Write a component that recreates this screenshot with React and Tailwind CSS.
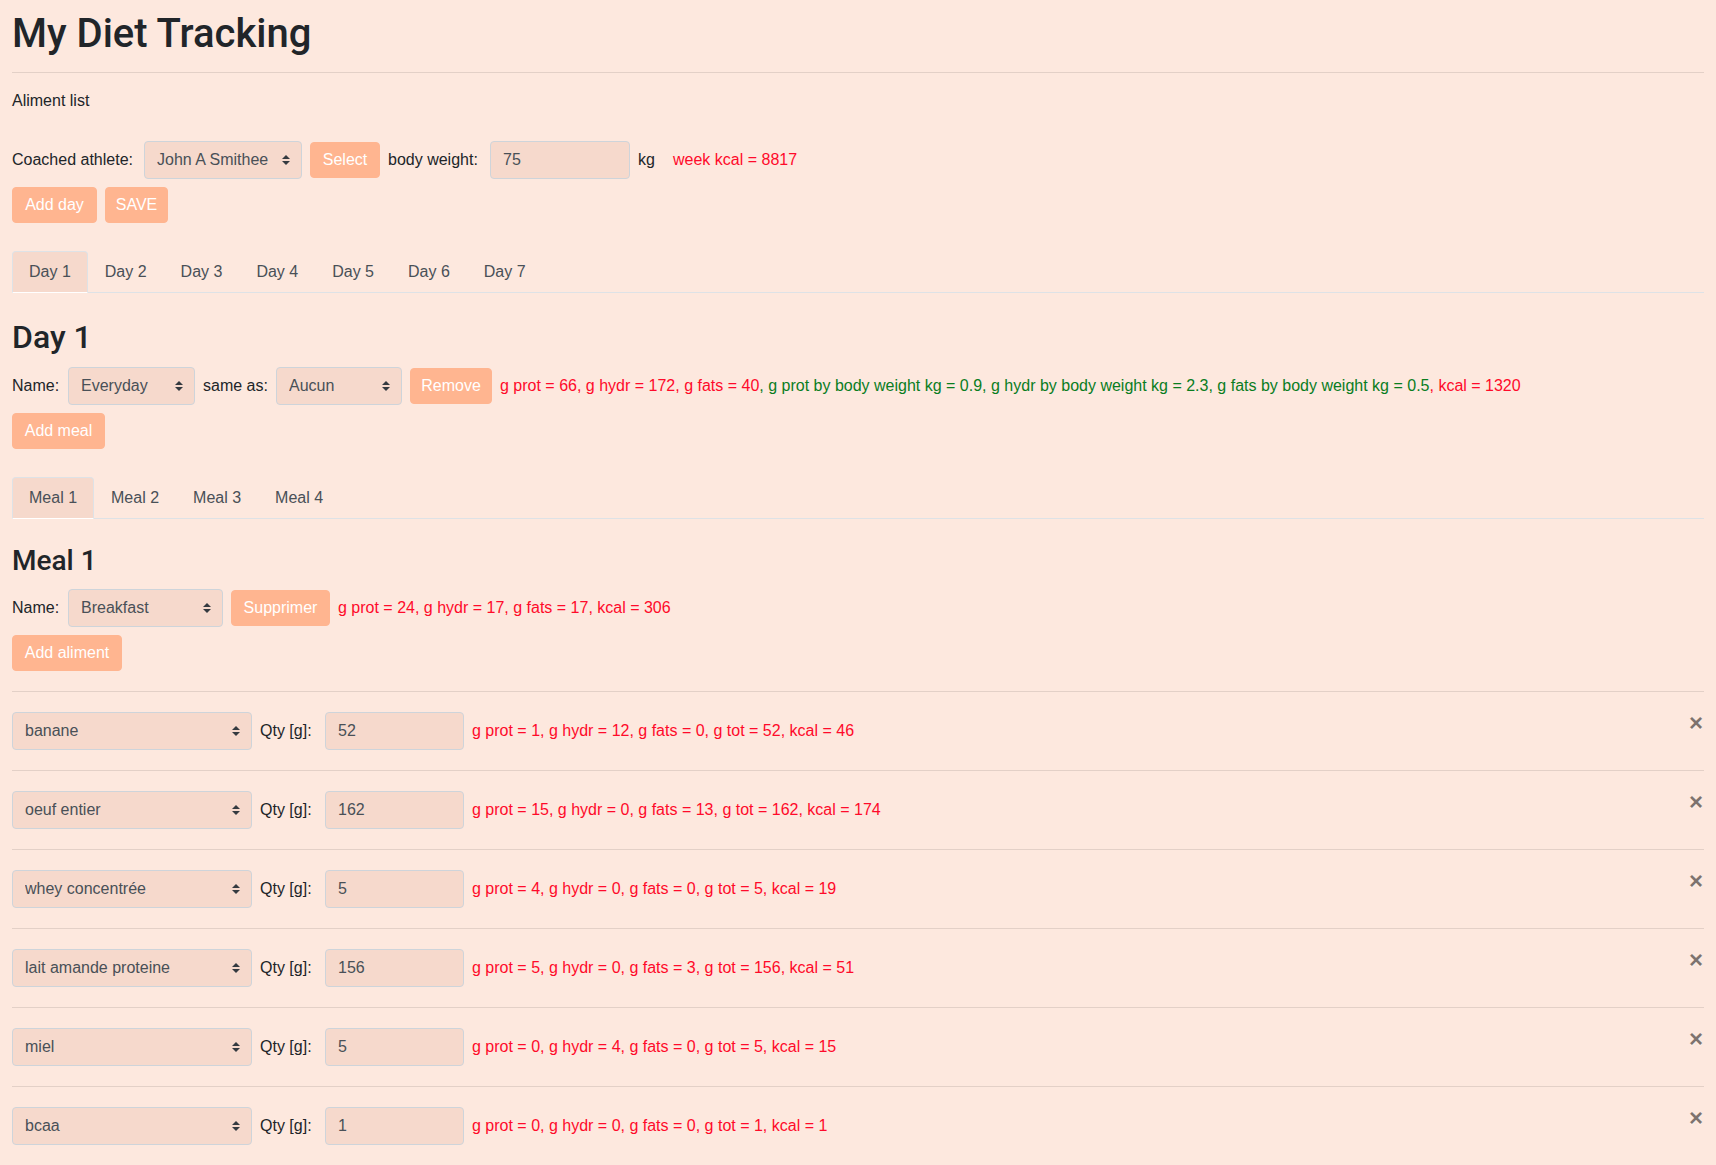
import React from 'react';

const aliments = [
  { name: 'banane', qty: '52', stats: 'g prot = 1, g hydr = 12, g fats = 0, g tot = 52, kcal = 46' },
  { name: 'oeuf entier', qty: '162', stats: 'g prot = 15, g hydr = 0, g fats = 13, g tot = 162, kcal = 174' },
  { name: 'whey concentrée', qty: '5', stats: 'g prot = 4, g hydr = 0, g fats = 0, g tot = 5, kcal = 19' },
  { name: 'lait amande proteine', qty: '156', stats: 'g prot = 5, g hydr = 0, g fats = 3, g tot = 156, kcal = 51' },
  { name: 'miel', qty: '5', stats: 'g prot = 0, g hydr = 4, g fats = 0, g tot = 5, kcal = 15' },
  { name: 'bcaa', qty: '1', stats: 'g prot = 0, g hydr = 0, g fats = 0, g tot = 1, kcal = 1' },
];

const days = ['Day 1', 'Day 2', 'Day 3', 'Day 4', 'Day 5', 'Day 6', 'Day 7'];
const meals = ['Meal 1', 'Meal 2', 'Meal 3', 'Meal 4'];

function Select({ value, className }) {
  return (
    <div className={`relative h-[38px] shrink-0 ${className}`}>
      <select
        defaultValue={value}
        className="appearance-none w-full h-full rounded border border-[#ced4da] bg-[#f6d9cc] pl-3 pr-7 text-base text-[#495057] outline-none"
      >
        <option>{value}</option>
      </select>
      <svg
        width="8"
        height="10"
        viewBox="0 0 4 5"
        className="pointer-events-none absolute right-3 top-[14px]"
      >
        <path d="M2 0L0 2h4zm0 5L0 3h4z" fill="#343a40" />
      </svg>
    </div>
  );
}

function Input({ value, className }) {
  return (
    <input
      defaultValue={value}
      className={`h-[38px] shrink-0 rounded border border-[#ced4da] bg-[#f6d9cc] px-3 text-base text-[#495057] outline-none ${className}`}
    />
  );
}

function Btn({ children, className }) {
  return (
    <button className={`h-[36px] shrink-0 rounded border border-[#ffb590] bg-[#ffb590] text-base text-white flex items-center justify-center ${className}`}>
      {children}
    </button>
  );
}

function Tabs({ items }) {
  return (
    <ul className="flex border-b border-[#dee2e6]">
      {items.map((t, i) => (
        <li key={t} className="-mb-px">
          <button
            className={
              i === 0
                ? 'h-[42px] px-4 rounded-t border border-[#dee2e6] border-b-white bg-[#f6d9cc] text-[#495057]'
                : 'h-[42px] px-4 rounded-t border border-transparent text-[#495057]'
            }
          >
            {t}
          </button>
        </li>
      ))}
    </ul>
  );
}

export default function App() {
  return (
    <div className="min-h-screen bg-[#fde8de] text-[#212529] font-['Liberation_Sans',Arial,sans-serif] text-base leading-6">
      <div className="px-3 pt-[10px] pb-10">
        <h1 className="font-['Roboto','Liberation_Sans',sans-serif] text-[40px] leading-[48px] font-medium">My Diet Tracking</h1>
        <hr className="mt-[14px] border-0 border-t border-black/10" />
        <div className="mt-4">Aliment list</div>

        <div className="mt-[28px] flex items-center gap-2 h-[38px]">
          <span className="w-[124px] whitespace-nowrap">Coached athlete:</span>
          <Select value="John A Smithee" className="w-[158px]" />
          <Btn className="w-[70px]">Select</Btn>
          <span className="w-[94px] whitespace-nowrap">body weight:</span>
          <Input value="75" className="w-[140px]" />
          <span className="w-[27px]">kg</span>
          <span className="text-[#ff0a2a]">week kcal = 8817</span>
        </div>

        <div className="mt-2 flex items-center gap-2">
          <Btn className="w-[85px]">Add day</Btn>
          <Btn className="w-[63px]">SAVE</Btn>
        </div>

        <div className="mt-[28px]">
          <Tabs items={days} />
        </div>

        <h2 className="mt-[25px] font-['Roboto','Liberation_Sans',sans-serif] text-[32px] leading-[38px] font-medium">Day 1</h2>

        <div className="mt-[11px] flex items-center gap-2 h-[38px]">
          <span className="w-[48px]">Name:</span>
          <Select value="Everyday" className="w-[127px]" />
          <span className="w-[65px] whitespace-nowrap">same as:</span>
          <Select value="Aucun" className="w-[126px]" />
          <Btn className="w-[82px]">Remove</Btn>
          <span className="whitespace-nowrap">
            <span className="text-[#ff0a2a]">g prot = 66, g hydr = 172, g fats = 40</span>
            <span className="text-[#0a7d1e]">, g prot by body weight kg = 0.9, g hydr by body weight kg = 2.3, g fats by body weight kg = 0.5</span>
            <span className="text-[#ff0a2a]">, kcal = 1320</span>
          </span>
        </div>

        <div className="mt-2 flex">
          <Btn className="w-[93px]">Add meal</Btn>
        </div>

        <div className="mt-[28px]">
          <Tabs items={meals} />
        </div>

        <h3 className="mt-[25px] font-['Roboto','Liberation_Sans',sans-serif] text-[28px] leading-[34px] font-medium">Meal 1</h3>

        <div className="mt-[11px] flex items-center gap-2 h-[38px]">
          <span className="w-[48px]">Name:</span>
          <Select value="Breakfast" className="w-[155px]" />
          <Btn className="w-[99px]">Supprimer</Btn>
          <span className="text-[#ff0a2a] whitespace-nowrap">g prot = 24, g hydr = 17, g fats = 17, kcal = 306</span>
        </div>

        <div className="mt-2 flex">
          <Btn className="w-[110px]">Add aliment</Btn>
        </div>

        <div className="mt-[20px]">
          {aliments.map((a) => (
            <div key={a.name} className="flex items-start border-t border-black/10 py-5">
              <div className="flex items-center gap-2 h-[38px]">
                <Select value={a.name} className="w-[240px]" />
                <span className="w-[57px] whitespace-nowrap">Qty [g]:</span>
                <Input value={a.qty} className="w-[139px]" />
                <span className="text-[#ff0a2a] whitespace-nowrap">{a.stats}</span>
              </div>
              <button className="ml-auto -mt-[1px] mr-[1px] text-[24px] leading-none font-bold text-black opacity-50 [text-shadow:0_1px_0_#fff]">
                ×
              </button>
            </div>
          ))}
        </div>
      </div>
    </div>
  );
}
